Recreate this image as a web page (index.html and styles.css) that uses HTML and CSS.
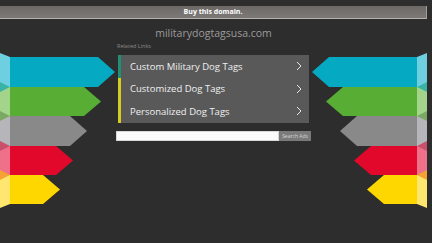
FILE: index.html
```html
<!DOCTYPE html>
<html>
<head>
<meta charset="utf-8">
<link rel="stylesheet" href="styles.css">
</head>
<body>
<div class="topbar">Buy this domain.</div>
<h1 class="domain">militarydogtagsusa.com</h1>
<div class="stage">
  <svg class="ribbon" width="116" height="167" viewBox="0 43 116 167">
    <polygon points="0,57 98,57 115,72 98,87 0,87" fill="#05a9c2"/>
    <polygon points="0,87 84,87 101,101.5 84,116 0,116" fill="#58ad34"/>
    <polygon points="0,116 70,116 87,131 70,146 0,146" fill="#8a898a"/>
    <polygon points="0,146 56,146 73,160.5 56,175 0,175" fill="#e2082c"/>
    <polygon points="0,175 43,175 60,189.5 43,204 0,204" fill="#fed700"/>
    <polygon points="0,53 10,57 10,87 0,87" fill="#6dcfdf"/>
    <polygon points="0,87 10,87 10,116 0,116" fill="#a4d48a"/>
    <polygon points="0,116 10,116 10,146 0,146" fill="#b6b6ba"/>
    <polygon points="0,146 10,146 10,175 0,175" fill="#ee7089"/>
    <polygon points="0,175 10,175 10,204 0,208" fill="#ffe66e"/>
    <polygon points="0,82 10,87 0,92" fill="#39b3a6"/>
    <polygon points="0,111 10,116 0,121" fill="#7ba862"/>
    <polygon points="0,141 10,146 0,151" fill="#c9506b"/>
    <polygon points="0,170 10,175 0,180" fill="#f6a233"/>
  </svg>
  <div class="center">
    <div class="related">Related Links</div>
    <ul class="links">
      <li class="link first"><span>Custom Military Dog Tags</span><svg class="chev" width="6" height="10" viewBox="0 0 6 10"><path d="M1 1 L5 5 L1 9" fill="none" stroke="#e8e8e8" stroke-width="1"/></svg></li>
      <li class="link"><span>Customized Dog Tags</span><svg class="chev" width="6" height="10" viewBox="0 0 6 10"><path d="M1 1 L5 5 L1 9" fill="none" stroke="#e8e8e8" stroke-width="1"/></svg></li>
      <li class="link"><span>Personalized Dog Tags</span><svg class="chev" width="6" height="10" viewBox="0 0 6 10"><path d="M1 1 L5 5 L1 9" fill="none" stroke="#e8e8e8" stroke-width="1"/></svg></li>
    </ul>
    <div class="search">
      <div class="search-input"></div>
      <div class="search-btn">Search Ads</div>
    </div>
  </div>
  <svg class="ribbon flip" width="116" height="167" viewBox="0 43 116 167">
    <polygon points="0,57 98,57 115,72 98,87 0,87" fill="#05a9c2"/>
    <polygon points="0,87 84,87 101,101.5 84,116 0,116" fill="#58ad34"/>
    <polygon points="0,116 70,116 87,131 70,146 0,146" fill="#8a898a"/>
    <polygon points="0,146 56,146 73,160.5 56,175 0,175" fill="#e2082c"/>
    <polygon points="0,175 43,175 60,189.5 43,204 0,204" fill="#fed700"/>
    <polygon points="0,53 10,57 10,87 0,87" fill="#6dcfdf"/>
    <polygon points="0,87 10,87 10,116 0,116" fill="#a4d48a"/>
    <polygon points="0,116 10,116 10,146 0,146" fill="#b6b6ba"/>
    <polygon points="0,146 10,146 10,175 0,175" fill="#ee7089"/>
    <polygon points="0,175 10,175 10,204 0,208" fill="#ffe66e"/>
    <polygon points="0,82 10,87 0,92" fill="#39b3a6"/>
    <polygon points="0,111 10,116 0,121" fill="#7ba862"/>
    <polygon points="0,141 10,146 0,151" fill="#c9506b"/>
    <polygon points="0,170 10,175 0,180" fill="#f6a233"/>
  </svg>
</div>
</body>
</html>
```

FILE: styles.css
```css
html, body {
  margin: 0;
  padding: 0;
  background: #2e2d2d;
  overflow: hidden;
  font-family: "Open Sans", "DejaVu Sans", sans-serif;
}
.topbar {
  margin-top: 6px;
  width: 426px;
  height: 12px;
  line-height: 12px;
  background: linear-gradient(to bottom, #6c6865, #7d7976);
  border-bottom: 1px solid #b5b1ac;
  border-right: 1px solid #a09c98;
  color: #ffffff;
  font-weight: bold;
  font-size: 7px;
  text-align: center;
}
.domain {
  margin: 7px 0 0 0;
  height: 15px;
  line-height: 15px;
  font-size: 10.5px;
  font-weight: normal;
  color: #9c9b9b;
  text-align: center;
  padding-right: 5px;
}
.stage {
  display: flex;
  align-items: flex-start;
  margin-top: 2px;
}
.ribbon {
  display: block;
  flex: none;
}
.flip {
  transform: scaleX(-1);
}
.center {
  width: 195px;
  flex: none;
}
.related {
  margin-left: 1px;
  height: 7px;
  line-height: 7px;
  font-size: 5.5px;
  color: #8a8989;
}
.links {
  list-style: none;
  margin: 5px 0 0 2px;
  padding: 0;
  width: 191px;
  background: #595959;
}
.link {
  display: flex;
  align-items: center;
  justify-content: space-between;
  height: 22.6px;
  padding: 0 7px 0 9px;
  border-left: 3px solid #d6cd22;
  color: #f0f0f0;
  font-size: 9.5px;
}
.link.first {
  border-left-color: #1f8f76;
}
.chev {
  display: block;
}
.search {
  display: flex;
  margin-top: 8px;
  height: 10px;
}
.search-input {
  width: 163px;
  background: #fbfbfb;
  border: 1px solid #d8d8d8;
  box-sizing: border-box;
}
.search-btn {
  width: 32px;
  background: #7a7a7a;
  color: #d6d6d6;
  font-size: 5px;
  line-height: 10px;
  text-align: center;
}
```
